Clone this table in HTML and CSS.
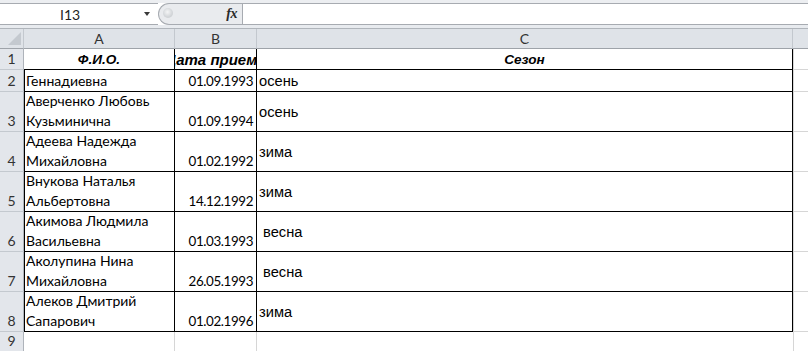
FILE: index.html
```html
<!DOCTYPE html>
<html lang="ru">
<head>
<meta charset="utf-8">
<title>Лист</title>
<link rel="stylesheet" href="styles.css">
</head>
<body>
<div class="app">
  <div class="top">
    <div class="fbar">
      <div class="namebox"><span class="name">I13</span><span class="arrow"></span></div>
      <div class="fxzone"><span class="knob"></span><span class="fx">fx</span></div>
      <div class="finput"></div>
    </div>
    <div class="gap"></div>
  </div>
  <div class="sheet">
    <div class="c corner"><svg width="13" height="13" viewBox="0 0 13 13"><polygon points="13,0 13,13 0,13" fill="#c4c9cf"/></svg></div>
    <div class="c hd">A</div>
    <div class="c hd">B</div>
    <div class="c hd hdc">C</div>
    <div class="c hd hdd"></div>

    <div class="c rh">1</div>
    <div class="c k t">Ф.И.О.</div>
    <div class="c k t tb"><span class="clip">Дата приема</span></div>
    <div class="c k t">Сезон</div>
    <div class="c dd"></div>

    <div class="c rh">2</div>
    <div class="c k a">Геннадиевна</div>
    <div class="c k dt">01.09.1993</div>
    <div class="c k s">осень</div>
    <div class="c dd"></div>

    <div class="c rh">3</div>
    <div class="c k a">Аверченко Любовь Кузьминична</div>
    <div class="c k dt">01.09.1994</div>
    <div class="c k s">осень</div>
    <div class="c dd"></div>

    <div class="c rh">4</div>
    <div class="c k a">Адеева Надежда Михайловна</div>
    <div class="c k dt">01.02.1992</div>
    <div class="c k s">зима</div>
    <div class="c dd"></div>

    <div class="c rh">5</div>
    <div class="c k a">Внукова Наталья Альбертовна</div>
    <div class="c k dt">14.12.1992</div>
    <div class="c k s">зима</div>
    <div class="c dd"></div>

    <div class="c rh">6</div>
    <div class="c k a">Акимова Людмила Васильевна</div>
    <div class="c k dt">01.03.1993</div>
    <div class="c k s"> весна</div>
    <div class="c dd"></div>

    <div class="c rh">7</div>
    <div class="c k a">Аколупина Нина Михайловна</div>
    <div class="c k dt">26.05.1993</div>
    <div class="c k s"> весна</div>
    <div class="c dd"></div>

    <div class="c rh">8</div>
    <div class="c k a">Алеков Дмитрий Сапарович</div>
    <div class="c k dt">01.02.1996</div>
    <div class="c k s">зима</div>
    <div class="c dd"></div>

    <div class="c rh">9</div>
    <div class="c"></div>
    <div class="c"></div>
    <div class="c c9"></div>
    <div class="c dd"></div>
  </div>
</div>
</body>
</html>
```

FILE: styles.css
```css
html, body {
  margin: 0;
  padding: 0;
  background: #ffffff;
}

.app {
  width: 808px;
  height: 351px;
  overflow: hidden;
  font-family: "Lato", "Liberation Sans", sans-serif;
  font-size: 14px;
  color: #000;
}

.top {
  background: #eceef1;
  padding-top: 3px;
}

.fbar {
  display: flex;
  height: 22px;
  background: #ffffff;
}

.namebox {
  width: 158px;
  box-sizing: border-box;
  border-top: 1px solid #a7abb1;
  border-bottom: 1px solid #a7abb1;
  display: flex;
  align-items: center;
  padding-left: 60px;
}

.name {
  color: #1e1e1e;
  font-size: 14px;
}

.arrow {
  margin-left: auto;
  margin-right: 8px;
  width: 0;
  height: 0;
  border-left: 3.5px solid transparent;
  border-right: 3.5px solid transparent;
  border-top: 4px solid #3a3a3a;
}

.fxzone {
  width: 84px;
  box-sizing: border-box;
  border: 1px solid #a7abb1;
  border-right: 0;
  border-radius: 11px 0 0 11px;
  background: #e9ebee;
  display: flex;
  align-items: center;
  padding-left: 4px;
  padding-right: 5px;
}

.knob {
  width: 10px;
  height: 10px;
  border-radius: 50%;
  margin-top: -3px;
  background: radial-gradient(circle at 45% 40%, #f4f5f6 0, #d5d8db 55%, #c3c6ca 100%);
}

.fx {
  margin-left: auto;
  font-family: "Liberation Serif", serif;
  font-style: italic;
  font-weight: bold;
  font-size: 14px;
  color: #2a2a2a;
  letter-spacing: -0.5px;
}

.finput {
  flex: 1;
  box-sizing: border-box;
  border-top: 1px solid #a7abb1;
  border-bottom: 1px solid #a7abb1;
  border-left: 1px solid #a7abb1;
}

.gap {
  height: 3px;
  background: #e8ebef;
  border-bottom: 1px solid #b0b5bb;
}

.sheet {
  display: grid;
  grid-template-columns: 24px 151px 82px 536px 1fr;
  grid-template-rows: 20px 21px 22px repeat(6, 40px) 20px;
}

.c {
  box-sizing: border-box;
  border-right: 1px solid #d6d6d6;
  border-bottom: 1px solid #d6d6d6;
  display: flex;
  overflow: hidden;
  white-space: nowrap;
  min-width: 0;
}

.corner {
  background: #dfe3e8;
  border-right-color: #c3c8ce;
  border-bottom-color: #9ea3a9;
  justify-content: flex-end;
  align-items: flex-end;
  padding: 0 2px 3px 0;
}

.hd {
  background: #dfe3e8;
  border-right-color: #c3c8ce;
  border-bottom-color: #9ea3a9;
  justify-content: center;
  align-items: center;
  color: #333;
}

.hdd {
  border-right: 0;
}

.rh {
  background: #e3e6eb;
  border-right-color: #aeb3ba;
  border-bottom-color: #c4c9cf;
  justify-content: center;
  align-items: flex-end;
  line-height: 20px;
  color: #333;
}

.k {
  border-right-color: #000;
  border-bottom-color: #000;
}

.t {
  font-family: "Liberation Sans", Arial, sans-serif;
  font-size: 13.6px;
  font-weight: bold;
  font-style: italic;
  justify-content: center;
  align-items: flex-end;
  line-height: 18px;
}

.tb {
  font-size: 15px;
}

.clip {
  white-space: pre;
  flex-shrink: 0;
}

.a {
  white-space: normal;
  align-items: flex-end;
  line-height: 20px;
  padding-left: 2px;
  box-shadow: inset 1px 0 0 #000;
}

.dt {
  justify-content: flex-end;
  align-items: flex-end;
  line-height: 20px;
  padding-right: 3px;
  font-size: 13.4px;
  letter-spacing: -0.4px;
}

.s {
  font-family: "Liberation Sans", Arial, sans-serif;
  font-size: 14.67px;
  align-items: center;
  padding-left: 2px;
  white-space: pre;
}

.dd {
  border-right: 0;
  border-left: 1px solid #d6d6d6;
}

.c9 {
  border-right-color: transparent;
}
```
